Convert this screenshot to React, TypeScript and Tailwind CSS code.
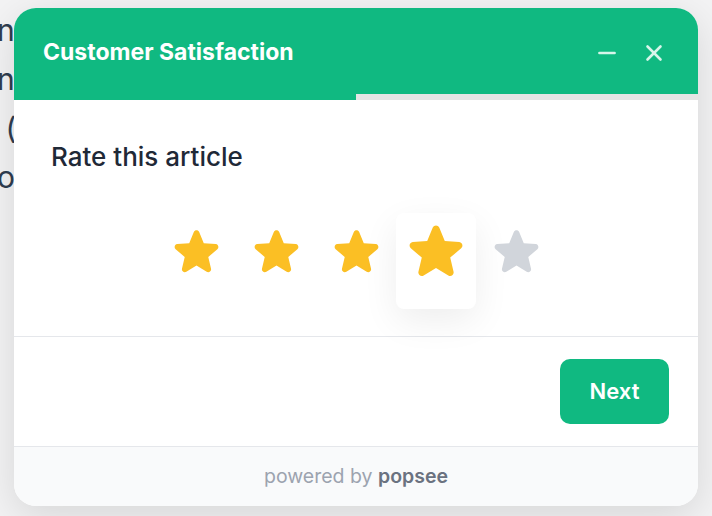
import { Minus, X } from "lucide-react"

const stars = [1, 2, 3, 4, 5]
const rating = 4
const hovered = 4

function StarIcon({ size, color }: { size: number; color: string }) {
  return (
    <svg width={size} height={size} viewBox="0 0 24 24" fill={color}>
      <path d="M10.788 3.21c.448-1.077 1.976-1.077 2.424 0l2.082 5.006 5.404.434c1.164.093 1.636 1.545.749 2.305l-4.117 3.527 1.257 5.273c.271 1.136-.964 2.033-1.96 1.425L12 18.354 7.373 21.18c-.996.608-2.231-.29-1.96-1.425l1.257-5.273-4.117-3.527c-.887-.76-.415-2.212.749-2.305l5.404-.434 2.082-5.005Z" />
    </svg>
  )
}

export default function App() {
  return (
    <div
      className="relative h-[516px] w-[712px] overflow-hidden bg-[#f3f3f4]"
      style={{ fontFamily: "Inter, 'Noto Sans', sans-serif" }}
    >
      {/* article text behind the popup */}
      <div className="-ml-[3px] pt-[6px] text-[30px] leading-[49px] whitespace-pre text-[#2f3d50]">
        <div>nd</div>
        <div>nd</div>
        <div> (</div>
        <div>o</div>
      </div>

      <div className="absolute left-[14px] top-[8px] flex h-[498px] w-[684px] flex-col overflow-hidden rounded-[22px] bg-white shadow-[0_10px_40px_rgba(0,0,0,0.12)]">
        <header className="flex h-[86px] items-center justify-between bg-[#10b981] pl-[29px] pr-[31px] pt-[3px]">
          <h2 className="text-[23px] font-bold text-white">Customer Satisfaction</h2>
          <div className="flex items-center gap-[21px] text-[#d7f5ea]">
            <button>
              <Minus size={26} strokeWidth={2.4} />
            </button>
            <button>
              <X size={26} strokeWidth={2.4} />
            </button>
          </div>
        </header>
        <div className="h-[6px] bg-[#e5e5e5]">
          <div className="h-full w-1/2 bg-[#10b981]" />
        </div>

        <div className="border-b border-[#e5e7eb] px-[37px] pb-[27px] pt-[41px]">
          <p className="text-[26px] leading-8 font-medium text-[#1f2937]">Rate this article</p>
          <div className="mt-[40px] flex justify-center">
            {stars.map((n) => (
              <button
                key={n}
                className={
                  n === hovered
                    ? "flex h-[96px] w-[80px] justify-center rounded-lg bg-white pt-[6px] shadow-[0_12px_36px_rgba(0,0,0,0.07)]"
                    : "flex h-[96px] w-[80px] justify-center pt-[12px]"
                }
              >
                <StarIcon size={n === hovered ? 64 : 53} color={n <= rating ? "#fbbf24" : "#d1d5db"} />
              </button>
            ))}
          </div>
        </div>

        <div className="flex justify-end border-b border-[#e5e7eb] pb-[22px] pr-[29px] pt-[22px]">
          <button className="h-[65px] w-[109px] rounded-[10px] bg-[#10b981] text-[22px] font-semibold text-white">
            Next
          </button>
        </div>

        <div className="flex flex-1 items-center justify-center bg-[#f9fafb] text-[19.5px] text-[#9ca3af]">
          <span>
            powered by <span className="font-semibold text-[#6b7280]">popsee</span>
          </span>
        </div>
      </div>
    </div>
  )
}
